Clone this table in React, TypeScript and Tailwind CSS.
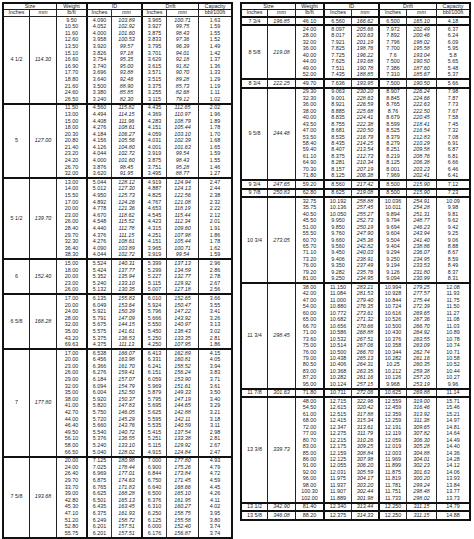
import React from "react";

type Group = { size: string; mm: string; rows: string[] };

const leftGroups: Group[] = [
  {
    size: "4 1/2",
    mm: "114.30",
    rows: [
      "9.50 4.090 103.89 3.965 100.71 1.63",
      "10.50 4.052 102.92 3.927 99.75 1.59",
      "11.60 4.000 101.60 3.875 98.43 1.55",
      "12.60 3.958 100.53 3.833 97.36 1.52",
      "13.50 3.920 99.57 3.795 96.39 1.49",
      "15.10 3.826 97.18 3.701 94.01 1.42",
      "16.60 3.754 95.35 3.629 92.18 1.37",
      "16.90 3.740 95.00 3.615 91.82 1.36",
      "17.70 3.696 93.88 3.571 90.70 1.33",
      "18.80 3.640 92.46 3.515 89.28 1.29",
      "21.60 3.500 88.90 3.375 85.73 1.19",
      "24.60 3.380 85.85 3.255 82.68 1.11",
      "26.50 3.240 82.30 3.115 79.12 1.02",
    ],
  },
  {
    size: "5",
    mm: "127.00",
    rows: [
      "11.50 4.560 115.82 4.435 112.65 2.02",
      "13.00 4.494 114.15 4.369 110.97 1.96",
      "15.00 4.408 111.96 4.283 108.79 1.89",
      "18.00 4.276 108.61 4.151 105.44 1.78",
      "20.30 4.184 106.27 4.059 103.10 1.70",
      "20.80 4.156 105.56 4.031 102.39 1.68",
      "21.40 4.126 104.80 4.001 101.63 1.65",
      "23.20 4.044 102.72 3.919 99.54 1.59",
      "24.20 4.000 101.60 3.875 98.43 1.55",
      "26.70 3.876 98.45 3.751 95.28 1.46",
      "32.00 3.620 91.95 3.495 88.77 1.27",
    ],
  },
  {
    size: "5 1/2",
    mm: "139.70",
    rows: [
      "13.00 5.044 128.12 4.919 124.94 2.47",
      "14.00 5.012 127.30 4.887 124.13 2.44",
      "15.50 4.950 125.73 4.825 122.56 2.38",
      "17.00 4.892 124.26 4.767 121.08 2.32",
      "20.00 4.778 121.36 4.653 118.19 2.22",
      "23.00 4.670 118.62 4.545 115.44 2.12",
      "26.00 4.548 115.52 4.423 112.34 2.01",
      "28.40 4.440 112.78 4.315 109.60 1.91",
      "29.70 4.376 111.15 4.251 107.98 1.86",
      "32.30 4.276 108.61 4.151 105.44 1.78",
      "36.40 4.090 103.89 3.965 100.71 1.62",
      "38.30 4.044 102.72 3.919 99.54 1.59",
    ],
  },
  {
    size: "6",
    mm: "152.40",
    rows: [
      "15.00 5.524 140.31 5.399 137.13 2.96",
      "18.00 5.424 137.77 5.299 134.59 2.86",
      "20.00 5.352 135.94 5.227 132.77 2.78",
      "23.00 5.240 133.10 5.115 129.92 2.67",
      "26.00 5.132 130.35 5.007 127.18 2.56",
    ],
  },
  {
    size: "6 5/8",
    mm: "168.28",
    rows: [
      "17.00 6.135 155.83 6.010 152.65 3.66",
      "20.00 6.049 153.64 5.924 150.47 3.55",
      "24.00 5.921 150.39 5.796 147.22 3.41",
      "28.00 5.791 147.09 5.666 143.92 3.26",
      "32.00 5.675 144.15 5.550 140.97 3.13",
      "35.00 5.575 141.61 5.450 138.43 3.02",
      "43.20 5.375 136.53 5.250 133.35 2.81",
      "69.63 4.375 111.13 4.250 107.95 1.86",
    ],
  },
  {
    size: "7",
    mm: "177.80",
    rows: [
      "17.00 6.538 166.07 6.413 162.89 4.15",
      "20.00 6.456 163.98 6.331 160.81 4.05",
      "23.00 6.366 161.70 6.241 158.52 3.94",
      "26.00 6.276 159.41 6.151 156.24 3.83",
      "29.00 6.184 157.07 6.059 153.90 3.71",
      "32.00 6.094 154.79 5.969 151.61 3.61",
      "35.00 6.004 152.50 5.879 149.33 3.50",
      "38.00 5.920 150.37 5.795 147.19 3.40",
      "41.00 5.820 147.83 5.695 144.65 3.29",
      "42.70 5.750 146.05 5.625 142.88 3.21",
      "44.00 5.720 145.29 5.595 142.11 3.18",
      "46.40 5.660 143.76 5.535 140.59 3.11",
      "49.50 5.540 140.72 5.415 137.54 2.98",
      "56.10 5.376 136.55 5.251 133.38 2.81",
      "58.00 5.240 133.10 5.115 129.92 2.67",
      "66.50 5.040 128.02 4.915 124.84 2.47",
    ],
  },
  {
    size: "7 5/8",
    mm: "193.68",
    rows: [
      "20.00 7.125 180.98 7.000 177.80 4.93",
      "24.00 7.025 178.44 6.900 175.26 4.79",
      "26.40 6.969 177.01 6.844 173.84 4.72",
      "29.70 6.875 174.63 6.750 171.45 4.59",
      "33.70 6.765 171.83 6.640 168.66 4.45",
      "39.00 6.625 168.28 6.500 165.10 4.26",
      "42.80 6.501 165.13 6.376 161.95 4.11",
      "45.30 6.435 163.45 6.310 160.27 4.02",
      "47.10 6.375 161.93 6.250 158.75 3.95",
      "51.20 6.249 158.72 6.125 155.58 3.80",
      "52.80 6.201 157.51 6.000 152.40 3.74",
      "55.75 6.201 157.51 6.176 156.87 3.74",
    ],
  },
];

const rightGroups: Group[] = [
  { size: "7 3/4", mm: "196.85", rows: ["46.10 6.560 166.62 6.500 165.10 4.18"] },
  {
    size: "8 5/8",
    mm: "219.08",
    rows: [
      "24.00 8.097 205.66 7.972 202.49 6.37",
      "28.00 8.017 203.63 7.892 200.46 6.24",
      "32.00 7.921 201.19 7.796 198.02 6.09",
      "36.00 7.825 198.76 7.700 195.58 5.95",
      "40.00 7.725 196.22 7.6 193.04 5.8",
      "44.00 7.625 193.68 7.500 190.50 5.65",
      "49.00 7.511 190.78 7.386 187.60 5.48",
      "52.00 7.435 188.85 7.310 185.67 5.37",
    ],
  },
  { size: "8 3/4", mm: "222.25", rows: ["49.70 7.636 193.95 7.500 190.50 5.66"] },
  {
    size: "9 5/8",
    mm: "244.48",
    rows: [
      "29.30 9.063 230.20 8.907 226.24 7.98",
      "32.30 9.001 228.63 8.845 224.66 7.87",
      "36.00 8.921 226.59 8.765 222.63 7.73",
      "38.00 8.885 225.68 8.76 222.50 7.67",
      "40.00 8.835 224.41 8.679 220.45 7.58",
      "43.50 8.755 222.38 8.599 218.41 7.45",
      "47.00 8.681 220.50 8.525 216.54 7.32",
      "53.50 8.535 216.79 8.379 212.83 7.08",
      "58.40 8.435 214.25 8.279 210.29 6.91",
      "59.40 8.407 213.54 8.251 209.58 6.87",
      "61.10 8.375 212.73 8.219 208.76 6.81",
      "64.90 8.281 210.34 8.125 206.38 6.66",
      "70.30 8.157 207.19 8.001 203.23 6.46",
      "71.80 8.125 206.38 7.969 202.41 6.41",
    ],
  },
  { size: "9 3/4", mm: "247.65", rows: ["59.20 8.560 217.42 8.500 215.90 7.12"] },
  { size: "9 7/8", mm: "250.83", rows: ["62.80 8.625 219.08 8.500 215.90 7.23"] },
  {
    size: "10 3/4",
    mm: "273.05",
    rows: [
      "32.75 10.192 258.88 10.036 254.91 10.09",
      "35.75 10.136 257.45 10.011 254.28 9.98",
      "40.50 10.050 255.27 9.894 251.31 9.81",
      "45.50 9.950 252.73 9.794 248.77 9.62",
      "51.00 9.850 250.19 9.694 246.23 9.42",
      "55.50 9.760 247.90 9.604 243.94 9.25",
      "60.70 9.660 245.36 9.504 241.40 9.06",
      "65.70 9.560 242.82 9.404 238.86 8.88",
      "71.10 9.450 240.03 9.294 236.07 8.67",
      "73.20 9.406 238.91 9.250 234.95 8.59",
      "76.00 9.350 237.49 9.194 233.53 8.49",
      "79.20 9.282 235.76 9.126 231.80 8.37",
      "81.00 9.250 234.95 9.094 230.99 8.31",
    ],
  },
  {
    size: "11 3/4",
    mm: "298.45",
    rows: [
      "38.00 11.150 283.21 10.994 279.25 12.08",
      "42.00 11.084 281.53 10.928 277.57 11.93",
      "47.00 11.000 279.40 10.844 275.44 11.75",
      "54.00 10.880 276.35 10.724 272.39 11.50",
      "60.00 10.772 273.61 10.616 269.65 11.27",
      "65.00 10.682 271.32 10.526 267.36 11.08",
      "66.70 10.656 270.66 10.500 266.70 11.03",
      "71.00 10.586 268.88 10.430 264.92 10.89",
      "73.60 10.532 267.51 10.376 263.55 10.78",
      "75.00 10.514 267.06 10.358 263.09 10.74",
      "76.00 10.500 266.70 10.344 262.74 10.71",
      "79.00 10.438 265.13 10.282 261.16 10.58",
      "80.50 10.406 264.31 10.25 260.35 10.52",
      "83.00 10.368 263.35 10.212 259.38 10.44",
      "87.20 10.282 261.16 10.126 257.20 10.27",
      "95.00 10.124 257.15 9.968 253.19 9.96",
    ],
  },
  { size: "11 7/8", mm: "301.63", rows: ["71.80 10.711 272.06 10.625 269.88 11.14"] },
  {
    size: "13 3/8",
    mm: "339.73",
    rows: [
      "48.00 12.715 322.96 12.559 319.00 15.71",
      "54.50 12.615 320.42 12.459 316.46 15.46",
      "61.00 12.515 317.88 12.359 313.92 15.21",
      "68.00 12.415 315.34 12.259 311.38 14.97",
      "72.00 12.347 313.61 12.191 309.65 14.81",
      "77.00 12.275 311.79 12.119 307.82 14.64",
      "80.70 12.215 310.26 12.059 306.30 14.49",
      "83.00 12.175 309.25 12.019 305.28 14.40",
      "85.00 12.159 308.84 12.003 304.88 14.36",
      "86.00 12.125 307.98 11.969 304.01 14.28",
      "91.00 12.055 306.20 11.899 302.23 14.12",
      "92.00 12.031 305.59 11.875 301.63 14.06",
      "96.00 11.975 304.17 11.819 300.20 13.93",
      "98.00 11.937 303.20 11.781 299.24 13.84",
      "100.30 11.907 302.44 11.751 298.48 13.77",
      "102.00 11.889 301.98 11.733 298.02 13.73",
    ],
  },
  { size: "13 1/2", mm: "342.90", rows: ["81.40 12.340 313.44 12.250 311.15 14.79"] },
  { size: "13 5/8", mm: "346.08", rows: ["88.20 12.375 314.33 12.250 311.15 14.88"] },
];

type Layout = {
  cols: string[];
  head: string[];
  rowH: string;
};

const leftLayout: Layout = {
  cols: ["w-[26px]", "w-[27px]", "w-[31px]", "w-[24px]", "w-[31px]", "w-[24px]", "w-[32px]", "w-[32px]"],
  head: ["w-[53px]", "w-[31px]", "w-[55px]", "w-[56px]", "w-[32px]"],
  rowH: "h-[6.6px]",
};

const rightLayout: Layout = {
  cols: ["w-[26px]", "w-[28px]", "w-[29px]", "w-[27px]", "w-[28px]", "w-[27px]", "w-[30px]", "w-[32px]"],
  head: ["w-[54px]", "w-[29px]", "w-[55px]", "w-[57px]", "w-[32px]"],
  rowH: "h-[6.47px]",
};

const colBorder = [
  "border-r border-[#222]",
  "border-r border-[#222]",
  "border-r-2 border-[#111]",
  "border-r border-[#333]",
  "border-r-2 border-[#111]",
  "border-r border-[#333]",
  "border-r border-[#222]",
  "",
];

const headBorder = [
  "border-r border-[#222]",
  "border-r-2 border-[#111]",
  "border-r-2 border-[#111]",
  "border-r border-[#222]",
  "",
];

const cell = "flex items-center justify-center leading-none whitespace-nowrap";

function DataTable({ groups, layout, firstThin }: { groups: Group[]; layout: Layout; firstThin: boolean }) {
  const row2 = ["Inches", "mm", "lb/ft", "Inches", "mm", "Inches", "mm", "bbl/100ft"];
  const row1 = ["Size", "Weight", "ID", "Drift", "Capacity"];
  return (
    <div className="flex flex-col border-2 border-[#111] text-[5.4px] text-[#1c1c1c]">
      <div className="flex h-[6px] border-b border-[#222]">
        {row1.map((t, i) => (
          <div key={t} className={`${cell} ${layout.head[i]} ${headBorder[i]}`}>
            {t}
          </div>
        ))}
      </div>
      <div className="flex h-[6px]">
        {row2.map((t, i) => (
          <div key={i} className={`${cell} ${layout.cols[i]} ${colBorder[i]} ${t === "mm" ? "italic" : ""}`}>
            {t}
          </div>
        ))}
      </div>
      {groups.map((g, gi) => (
        <div
          key={g.size}
          className={`flex ${gi === 0 && firstThin ? "border-t border-[#222]" : "border-t-2 border-[#111]"}`}
        >
          <div className={`${cell} ${layout.cols[0]} ${colBorder[0]}`}>{g.size}</div>
          <div className={`${cell} ${layout.cols[1]} ${colBorder[1]} italic`}>{g.mm}</div>
          <div className="flex flex-col">
            {g.rows.map((r, ri) => {
              const v = r.split(" ");
              return (
                <div key={ri} className={`flex ${layout.rowH}`}>
                  {v.map((x, ci) => (
                    <div
                      key={ci}
                      className={`${cell} ${layout.cols[ci + 2]} ${colBorder[ci + 2]} ${
                        ci === 2 || ci === 4 ? "italic" : ""
                      }`}
                    >
                      {x}
                    </div>
                  ))}
                </div>
              );
            })}
          </div>
        </div>
      ))}
    </div>
  );
}

export default function App() {
  return (
    <div
      className="h-[539px] w-[474px] overflow-hidden bg-white"
      style={{ fontFamily: '"Liberation Sans", Arial, sans-serif' }}
    >
      <div className="flex items-start gap-[7px] pl-[2px] pt-[2px]">
        <DataTable groups={leftGroups} layout={leftLayout} firstThin={true} />
        <DataTable groups={rightGroups} layout={rightLayout} firstThin={false} />
      </div>
    </div>
  );
}
